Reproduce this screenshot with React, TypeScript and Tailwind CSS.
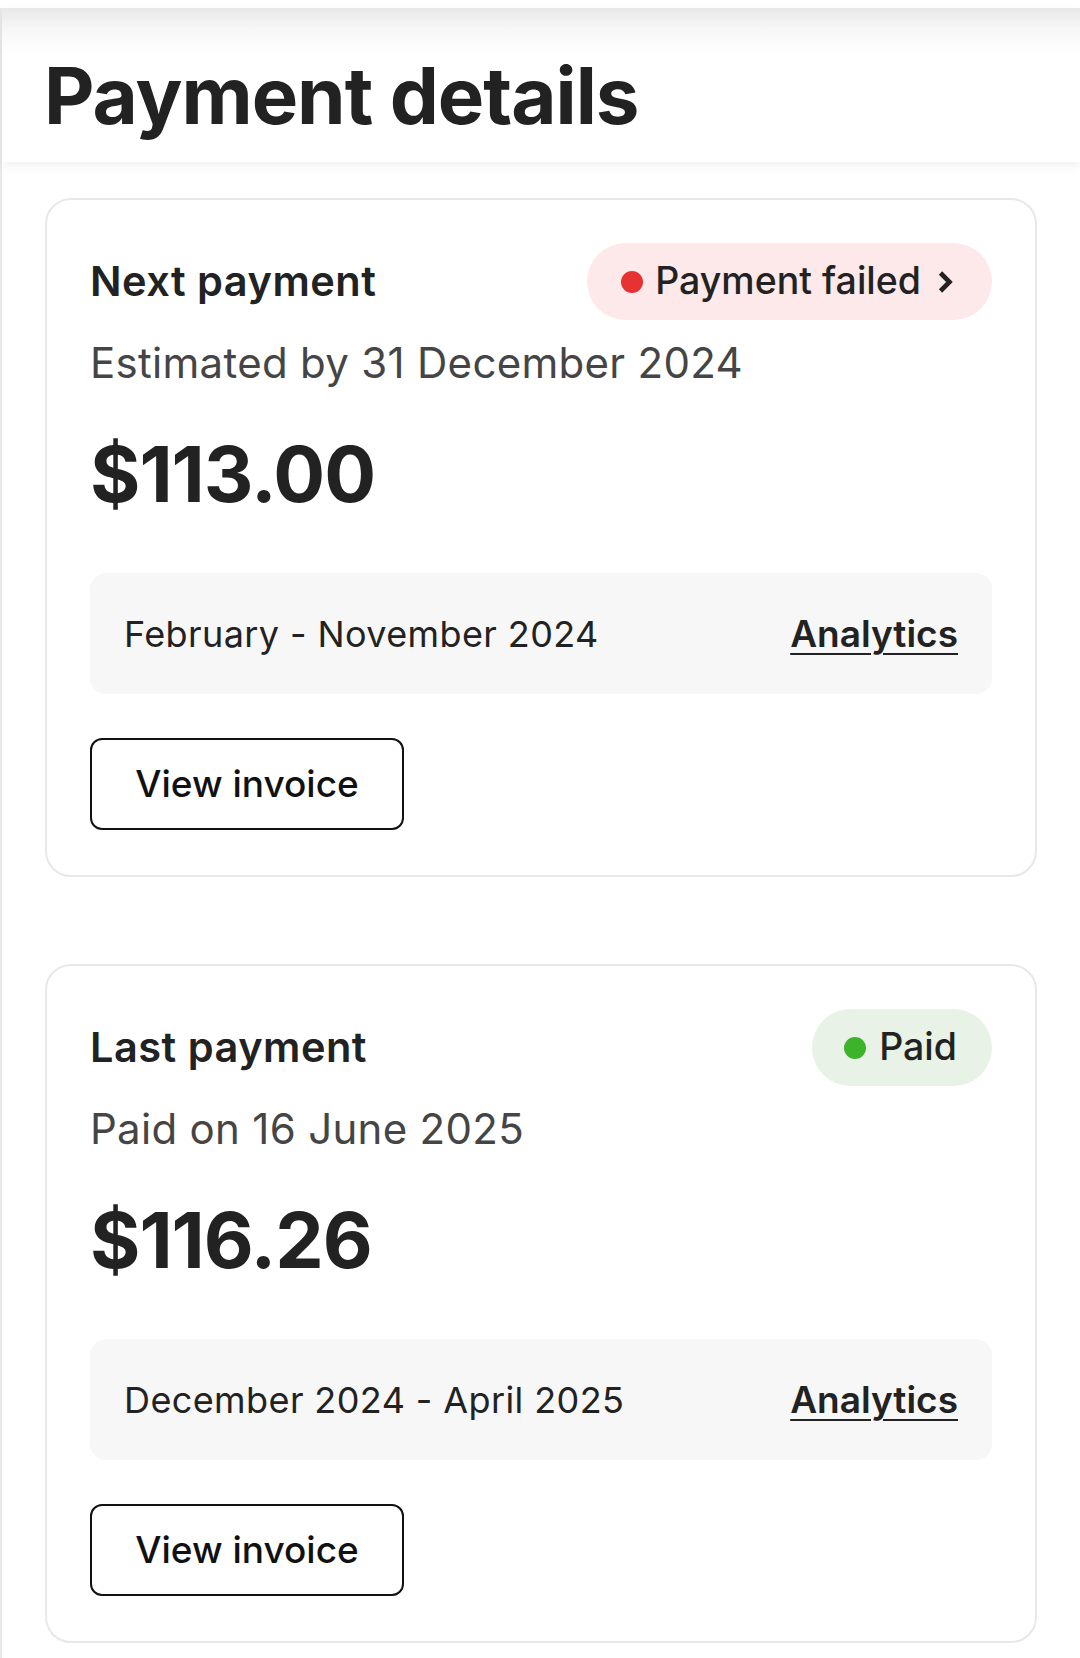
import React from "react";

interface PaymentCardProps {
  title: string;
  subtitle: string;
  amount: string;
  period: string;
  status: "failed" | "paid";
}

function Chevron() {
  return (
    <svg width="20" height="28" viewBox="0 0 20 28" fill="none" className="ml-[15px]">
      <path d="M4.5 5 L13.5 14 L4.5 23" stroke="#222222" strokeWidth="4.6" strokeLinejoin="miter" />
    </svg>
  );
}

function StatusPill({ status }: { status: "failed" | "paid" }) {
  if (status === "failed") {
    return (
      <button
        type="button"
        className="flex h-[77px] items-center rounded-full bg-[#fde9e9] pl-[34px] pr-[36px] text-[37.5px] font-medium text-[#222222]"
      >
        <span className="mr-[12px] h-[22px] w-[22px] rounded-full bg-[#e63232]" />
        <span>Payment failed</span>
        <Chevron />
      </button>
    );
  }
  return (
    <div className="flex h-[77px] items-center rounded-full bg-[#e8f2e7] pl-8 pr-[35px] text-[37.5px] font-medium text-[#222222]">
      <span className="mr-[13px] h-[22px] w-[22px] rounded-full bg-[#3db22b]" />
      <span>Paid</span>
    </div>
  );
}

function PaymentCard({ title, subtitle, amount, period, status }: PaymentCardProps) {
  return (
    <section className="rounded-[26px] border-2 border-[#e8e8e8] bg-white p-[43px] pb-[45px]">
      <div className="flex items-center justify-between">
        <h2 className="text-[41.5px] font-semibold leading-none tracking-[0.5px] text-[#222222]">
          {title}
        </h2>
        <StatusPill status={status} />
      </div>
      <p className="mt-[19px] text-[42px] leading-[48px] tracking-[0.3px] text-[#454545]">{subtitle}</p>
      <p className="mt-[49px] text-[77px] font-bold leading-none tracking-[-1px] text-[#222222]">
        {amount}
      </p>
      <div className="mt-[60px] flex h-[121px] items-center justify-between rounded-[16px] bg-[#f7f7f7] px-[34px]">
        <span className="text-[36px] tracking-[0.4px] text-[#222222]">{period}</span>
        <a
          href="#"
          className="text-[37px] font-semibold text-[#222222] underline decoration-2 underline-offset-[6px]"
        >
          Analytics
        </a>
      </div>
      <button
        type="button"
        className="mt-[44px] h-[92px] w-[314px] rounded-[12px] border-2 border-[#111111] bg-white text-[37px] font-medium text-[#111111]"
      >
        View invoice
      </button>
    </section>
  );
}

export default function App() {
  return (
    <div className="min-h-[1658px] bg-white pt-2 font-['Inter','Liberation_Sans',sans-serif]">
      <div className="min-h-[1650px] border-l-2 border-[#e8e8e8]">
        <header className="h-[154px] bg-[linear-gradient(to_bottom,#e8e8e8_0px,#f6f6f6_20px,#ffffff_46px)] pl-[42px] pt-[49px] shadow-[0_4px_10px_rgba(0,0,0,0.06)]">
          <h1 className="text-[78px] font-bold leading-none tracking-[-1px] text-[#222222]">
            Payment details
          </h1>
        </header>
        <main className="flex flex-col gap-[87px] px-[43px] pt-[36px]">
          <PaymentCard
            title="Next payment"
            subtitle="Estimated by 31 December 2024"
            amount="$113.00"
            period="February - November 2024"
            status="failed"
          />
          <PaymentCard
            title="Last payment"
            subtitle="Paid on 16 June 2025"
            amount="$116.26"
            period="December 2024 - April 2025"
            status="paid"
          />
        </main>
      </div>
    </div>
  );
}
